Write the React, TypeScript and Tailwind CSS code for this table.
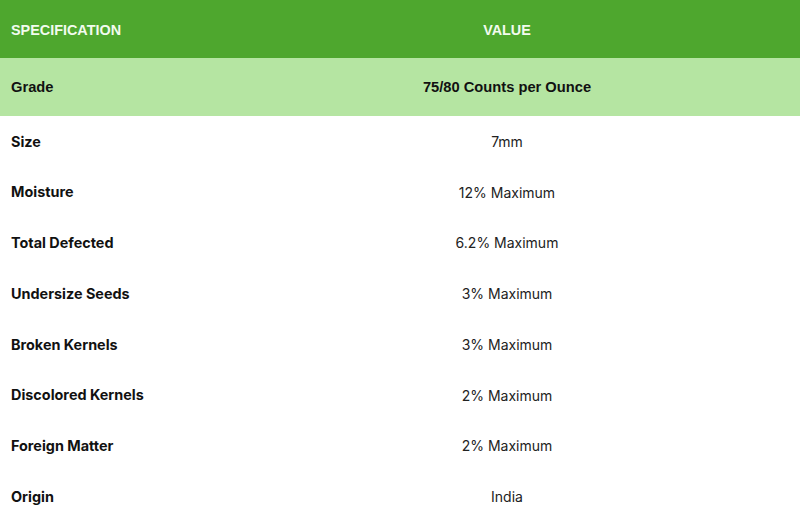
import React from "react";

const rows: [string, string][] = [
  ["Size", "7mm"],
  ["Moisture", "12% Maximum"],
  ["Total Defected", "6.2% Maximum"],
  ["Undersize Seeds", "3% Maximum"],
  ["Broken Kernels", "3% Maximum"],
  ["Discolored Kernels", "2% Maximum"],
  ["Foreign Matter", "2% Maximum"],
  ["Origin", "India"],
];

export default function App() {
  return (
    <div className="w-[800px] h-[522px] bg-white flex flex-col overflow-hidden">
      <div
        className="h-[58px] pt-[3px] flex items-center bg-[#4ea72e] text-[#f2fbee] text-[14.4px] font-bold"
        style={{ fontFamily: '"Liberation Sans", Arial, sans-serif' }}
      >
        <div className="w-[214px] pl-[11px]">SPECIFICATION</div>
        <div className="flex-1 text-center">VALUE</div>
      </div>
      <div
        className="h-[58px] flex items-center bg-[#b5e5a2] text-[#111] text-[14.7px] font-bold"
        style={{ fontFamily: '"Liberation Sans", Arial, sans-serif' }}
      >
        <div className="w-[214px] pl-[11px]">Grade</div>
        <div className="flex-1 text-center">75/80 Counts per Ounce</div>
      </div>
      <div
        className="flex-1 flex flex-col text-[14px] text-[#111]"
        style={{ fontFamily: "Inter, sans-serif" }}
      >
        {rows.map(([k, v]) => (
          <div key={k} className="flex-1 flex items-center">
            <div className="w-[214px] pl-[11px] font-bold text-[14.4px]">{k}</div>
            <div className="flex-1 text-center text-[#222]">{v}</div>
          </div>
        ))}
      </div>
    </div>
  );
}
